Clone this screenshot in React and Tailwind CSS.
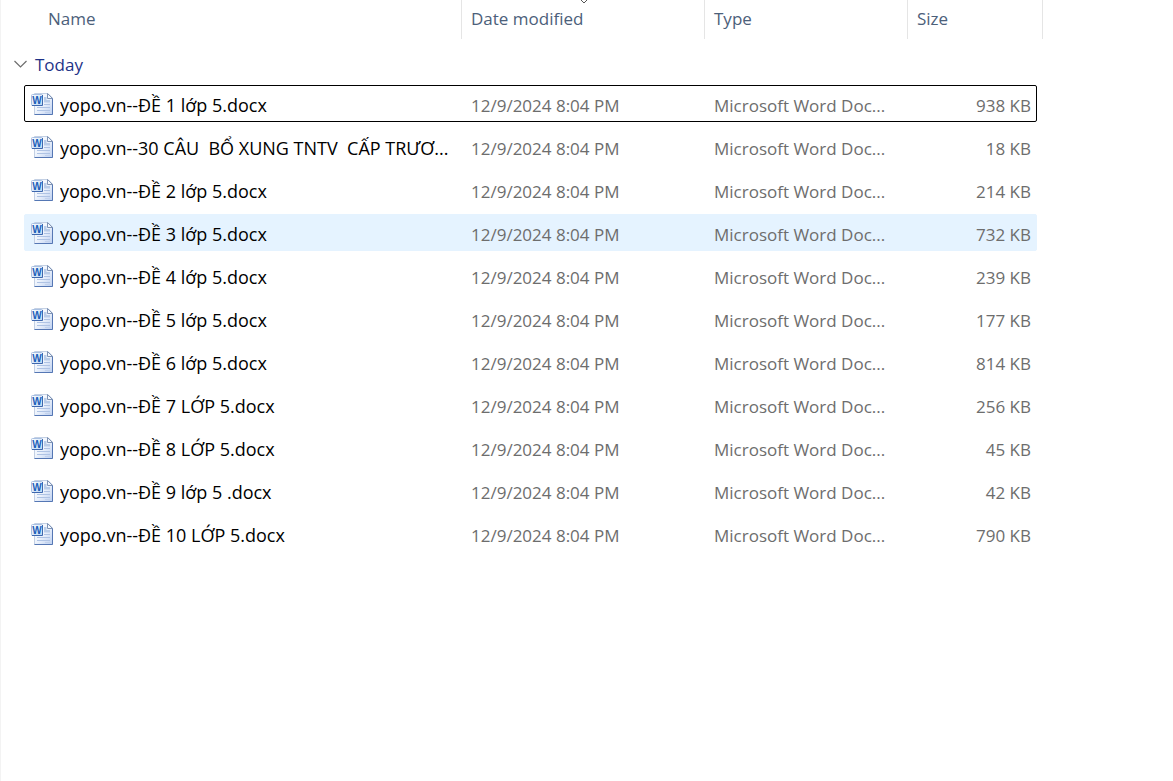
const FILES = [
  { name: 'yopo.vn--ĐỀ 1 lớp 5.docx', size: '938 KB', state: 'focused' },
  { name: 'yopo.vn--30 CÂU  BỔ XUNG TNTV  CẤP TRƯƠ...', size: '18 KB' },
  { name: 'yopo.vn--ĐỀ 2 lớp 5.docx', size: '214 KB' },
  { name: 'yopo.vn--ĐỀ 3 lớp 5.docx', size: '732 KB', state: 'hovered' },
  { name: 'yopo.vn--ĐỀ 4 lớp 5.docx', size: '239 KB' },
  { name: 'yopo.vn--ĐỀ 5 lớp 5.docx', size: '177 KB' },
  { name: 'yopo.vn--ĐỀ 6 lớp 5.docx', size: '814 KB' },
  { name: 'yopo.vn--ĐỀ 7 LỚP 5.docx', size: '256 KB' },
  { name: 'yopo.vn--ĐỀ 8 LỚP 5.docx', size: '45 KB' },
  { name: 'yopo.vn--ĐỀ 9 lớp 5 .docx', size: '42 KB' },
  { name: 'yopo.vn--ĐỀ 10 LỚP 5.docx', size: '790 KB' },
];

const ROW_STYLES = {
  focused: 'border-black',
  hovered: 'border-[#e5f3ff] bg-[#e5f3ff]',
  normal: 'border-transparent',
};

function WordIcon() {
  return (
    <svg width="24" height="24" viewBox="0 0 24 24" className="shrink-0" aria-hidden="true">
      <defs>
        <linearGradient id="page" x1="0" y1="0" x2="1" y2="1">
          <stop offset="0" stopColor="#ffffff" />
          <stop offset="0.5" stopColor="#edf3fc" />
          <stop offset="1" stopColor="#bccff0" />
        </linearGradient>
        <linearGradient id="badge" x1="0" y1="0" x2="1" y2="1">
          <stop offset="0" stopColor="#ffffff" />
          <stop offset="1" stopColor="#b9d6f5" />
        </linearGradient>
      </defs>
      <path d="M4.5 1.5H18L22.5 6V22.5H4.5Z" fill="url(#page)" stroke="#c3d0e4" />
      <path d="M22.5 6V22.5H4.5" fill="none" stroke="#5577b4" />
      <path d="M17.5 1.5V6.5H22.5Z" fill="#f4f8fd" stroke="#8094b6" />
      <path d="M14 5H16.5V8H20V10.5H14Z" fill="#b9cce8" />
      <path d="M14 12.5H20M7 15.5H20M7 18.5H20" stroke="#afc3e4" />
      <path d="M15 20.5H20" stroke="#c3d2ec" />
      <rect x="1.5" y="2.5" width="11" height="11" rx="1" fill="url(#badge)" stroke="#a9c0e2" />
      <path d="M12.5 3V13.5H2" fill="none" stroke="#3f68ae" />
      <text
        x="7"
        y="12"
        textAnchor="middle"
        fontSize="10"
        fontWeight="700"
        fill="#1c5fb8"
        className="font-['Liberation_Sans',sans-serif]"
      >
        W
      </text>
    </svg>
  );
}

function HeaderCell({ children, className }) {
  return (
    <th className={`relative border-r border-[#e5e5e5] text-left font-normal ${className}`}>
      <button type="button" className="flex h-full w-full items-center pb-[2px]">
        {children}
      </button>
    </th>
  );
}

function FileRow({ file }) {
  return (
    <tr
      className={`mb-[6px] mr-[6px] ml-6 grid h-[37px] grid-cols-[minmax(0,1fr)_243px_203px_129px] items-center rounded-xs border ${ROW_STYLES[file.state || 'normal']}`}
    >
      <td className="flex items-center gap-[6px] pl-[5px] text-lg leading-6 text-black">
        <WordIcon />
        <span className="overflow-hidden pt-[3px] whitespace-pre">{file.name}</span>
      </td>
      <td className="pt-1 pl-[10px]">12/9/2024 8:04 PM</td>
      <td className="pt-1 pl-[10px] whitespace-nowrap">Microsoft Word Doc...</td>
      <td className="pt-1 pr-[5px] text-right">{file.size}</td>
    </tr>
  );
}

export default function App() {
  return (
    <main className="min-h-screen border-l border-[#f3f3f3] bg-white pr-[130px] font-['Open_Sans',sans-serif] text-[17px] leading-6 text-[#6d6d6d]">
      <table className="-ml-px block">
        <thead className="block">
          <tr className="grid h-[39px] grid-cols-[minmax(0,1fr)_243px_203px_135px] text-[#4c607a]">
            <HeaderCell className="pl-12">Name</HeaderCell>
            <HeaderCell className="pl-[9px]">
              Date modified
              {/* Sort direction */}
              <svg width="10" height="4" viewBox="0 0 10 4" className="absolute top-0 left-[117px]" aria-hidden="true">
                <path d="M1 -1L5 3L9 -1" fill="none" stroke="#555555" />
              </svg>
            </HeaderCell>
            <HeaderCell className="pl-[9px]">Type</HeaderCell>
            <HeaderCell className="pl-[9px]">Size</HeaderCell>
          </tr>
        </thead>
        <tbody className="block">
          <tr className="block">
            <th className="block pt-[14px] pb-2 pl-[14px] text-left font-normal text-[#1e3287]">
              <button type="button" className="flex items-center gap-2">
                <svg width="13" height="8" viewBox="0 0 13 8" className="mb-[2px]" aria-hidden="true">
                  <path d="M0.5 1L6.5 7L12.5 1" fill="none" stroke="#6d6d6d" strokeWidth="1.2" />
                </svg>
                Today
              </button>
            </th>
          </tr>
          {FILES.map((file) => (
            <FileRow key={file.name} file={file} />
          ))}
        </tbody>
      </table>
    </main>
  );
}
